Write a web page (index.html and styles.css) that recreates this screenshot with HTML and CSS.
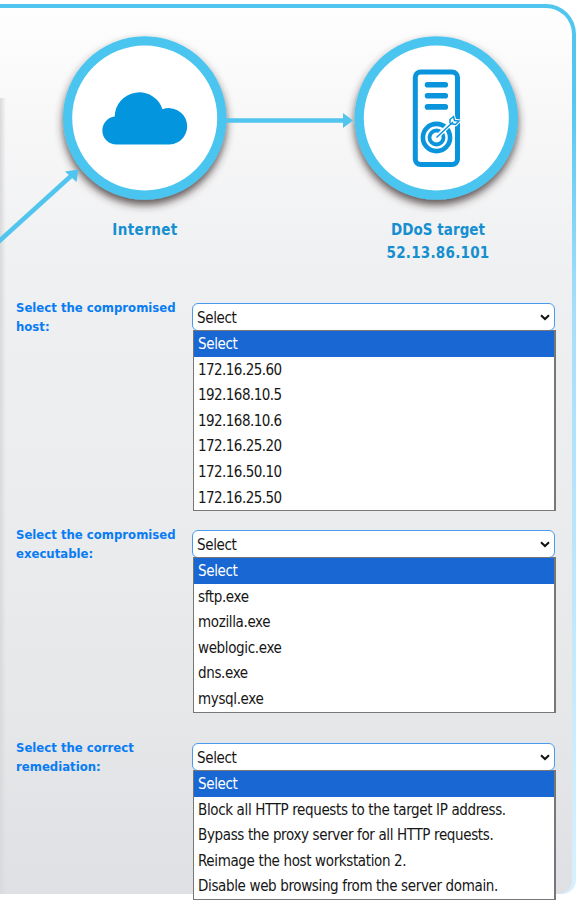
FILE: index.html
```html
<!DOCTYPE html>
<html lang="en">
<head>
<meta charset="utf-8">
<title>DDoS investigation</title>
<link rel="stylesheet" href="styles.css">
</head>
<body>
<div class="frame">
<main class="panel">
  <section class="diagram">
    <svg class="network" width="572" height="210" viewBox="0 8 572 210" aria-hidden="true">
      <defs>
        <filter id="shadow" x="-20%" y="-20%" width="140%" height="150%">
          <feDropShadow dx="0" dy="5" stdDeviation="4.5" flood-color="#382c2c" flood-opacity=".8"/>
        </filter>
      </defs>
      <g filter="url(#shadow)">
        <circle cx="144.7" cy="118" r="81.7" fill="#49c5ef"/>
        <circle cx="436.3" cy="118" r="81.7" fill="#49c5ef"/>
      </g>
      <circle cx="144.7" cy="118" r="72.5" fill="#fff"/>
      <circle cx="436.3" cy="118" r="72.5" fill="#fff"/>
      <g stroke="#52c5ee" stroke-width="4.6" fill="none">
        <path d="M226 120.5H345"/>
        <path d="M-3 243L71 176"/>
      </g>
      <g fill="#52c5ee">
        <path d="M343 113L353 120.500L343 128z"/>
        <path d="M78.500 169.500L65 171.500L76.500 182z"/>
      </g>
      <path fill="#0396de" d="M116.500 144.500A14 14 0 0 1 114.700 116.600A24.500 24.500 0 0 1 162.500 109.300A18.200 18.200 0 1 1 169.500 144.500z"/>
      <g fill="none" stroke="#0a94dc">
        <rect x="415.300" y="72" width="42.200" height="92.500" rx="5.500" stroke-width="5"/>
        <path d="M427.500 84.700H445.300M427.500 95.700H445.300M427.500 106.900H445.300" stroke-width="5.600" stroke-linecap="round"/>
        <circle cx="436.500" cy="137.500" r="13.600" stroke-width="4.600"/>
        <circle cx="436.500" cy="137.500" r="7" stroke-width="3.800"/>
        <path d="M437 137L452 122" stroke="#fff" stroke-width="4.500"/>
        <path d="M450 123.500L450 119.500L453.500 116.500L454.500 120.500L459 121L455.500 124.500L450 123.500z" fill="#fff" stroke="#fff" stroke-width="3.500"/>
        <path d="M436.500 137.500L453 122M450 123.500L450 119.500L453.500 116.500L454.500 120.500L459 121L455.500 124.500L450 123.500" stroke-width="1.500"/>
      </g>
    </svg>
    <div class="captions">
      <p class="caption internet">Internet</p>
      <p class="caption target"><span class="name">DDoS target</span><br><span class="address">52.13.86.101</span></p>
    </div>
  </section>
  <form class="questions">
    <div class="question host">
      <div class="prompt">Select the compromised<br>host:</div>
      <div class="dropdown">
        <div class="field">Select<svg class="chevron" viewBox="0 0 10 7"><path d="M1 1.200L5 5L9 1.200"/></svg></div>
        <ul class="options ips">
          <li class="active">Select</li>
          <li>172.16.25.60</li><li>192.168.10.5</li><li>192.168.10.6</li><li>172.16.25.20</li><li>172.16.50.10</li><li>172.16.25.50</li>
        </ul>
      </div>
    </div>
    <div class="question executable">
      <div class="prompt">Select the compromised<br>executable:</div>
      <div class="dropdown">
        <div class="field">Select<svg class="chevron" viewBox="0 0 10 7"><path d="M1 1.200L5 5L9 1.200"/></svg></div>
        <ul class="options">
          <li class="active">Select</li>
          <li>sftp.exe</li><li>mozilla.exe</li><li>weblogic.exe</li><li>dns.exe</li><li>mysql.exe</li>
        </ul>
      </div>
    </div>
    <div class="question remediation">
      <div class="prompt">Select the correct<br>remediation:</div>
      <div class="dropdown">
        <div class="field">Select<svg class="chevron" viewBox="0 0 10 7"><path d="M1 1.200L5 5L9 1.200"/></svg></div>
        <ul class="options">
          <li class="active">Select</li>
          <li>Block all HTTP requests to the target IP address.</li><li>Bypass the proxy server for all HTTP requests.</li><li>Reimage the host workstation 2.</li><li>Disable web browsing from the server domain.</li>
        </ul>
      </div>
    </div>
  </form>
</main>
</div>
</body>
</html>
```
FILE: styles.css
```css
* { box-sizing: border-box; }

body {
  margin: 0;
  height: 905px;
  overflow: hidden;
  background: #fff;
  font-family: Tahoma, "DejaVu Sans Condensed", "DejaVu Sans", sans-serif;
}

.frame {
  width: 576px;
  height: 890px;
  margin-top: 4px;
  padding: 4px 4px 0 0;
  border-radius: 0 30px 14px 0;
  background: linear-gradient(#50c5ee 0, #55c8f1 100px, #a5defb 300px, #bfe8fc 600px, #d8f0fd 890px);
}

.panel {
  height: 886px;
  border-radius: 0 26px 14px 0;
  background:
    linear-gradient(90deg, #d9d9db, rgba(228, 228, 230, 0)) 0 90px / 6px 100% no-repeat,
    linear-gradient(#fefefe, #f8f8f9 100px, #eff0f1 260px, #ebecee 500px, #e6e7e9 710px, #dfe0e3);
}

.network {
  display: block;
  overflow: visible;
}

.diagram { height: 291px; }

.captions {
  display: flex;
  padding-top: 1px;
}

.caption {
  flex: none;
  margin: 0;
  color: #168fd0;
  font-size: 15px;
  font-weight: bold;
  letter-spacing: .25px;
  line-height: 23px;
  text-align: center;
  white-space: nowrap;
}

.internet {
  width: 290px;
  letter-spacing: .4px;
}

.target { width: 296px; }
.name { letter-spacing: .05px; }

.question {
  display: grid;
  grid-template-columns: 176px 363px;
  padding-left: 16px;
}

.host { height: 227px; }
.executable { height: 213px; }

.prompt {
  margin-top: -1px;
  color: #087cf4;
  font-size: 13px;
  font-weight: bold;
  line-height: 19px;
  white-space: nowrap;
}

.dropdown {
  padding-top: 4px;
  font-size: 15px;
  letter-spacing: -.36px;
  color: #161616;
}

.field {
  display: flex;
  align-items: center;
  justify-content: space-between;
  width: 363px;
  height: 28px;
  padding: 1px 4px 0;
  border: 1px solid #4a9bed;
  border-radius: 6px;
  background: #fff;
}

.chevron {
  width: 10px;
  height: 7px;
  fill: none;
  stroke: #111;
  stroke-width: 2;
}

.options {
  position: relative;
  width: 363px;
  margin: -1px 0 0 1px;
  padding: 0;
  list-style: none;
  background: #fff;
  border: 1px solid #777;
  border-right: 2px solid #777;
}

.options li {
  height: 25.600px;
  padding-left: 4px;
  line-height: 27px;
  white-space: nowrap;
}

.ips li:not(.active) { letter-spacing: -.55px; }

.options .active {
  background: #1967d2;
  color: #fff;
}
```
